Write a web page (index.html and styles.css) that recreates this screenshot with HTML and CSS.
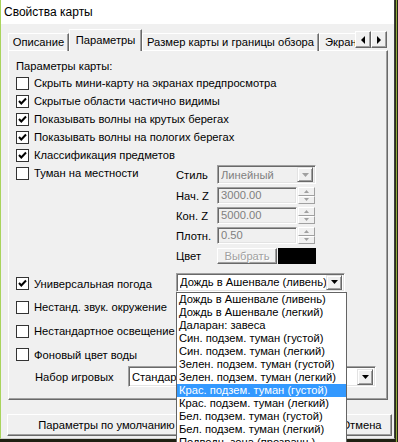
FILE: index.html
```html
<!DOCTYPE html>
<html lang="ru">
<head>
<meta charset="utf-8">
<title>Свойства карты</title>
<link rel="stylesheet" href="styles.css">
</head>
<body>
<div class="screen">
  <div class="window">
    <div class="titlebar">Свойства карты</div>
    <div class="tabstrip">
      <div class="tabs">
        <div class="tab t1">Описание</div>
        <div class="tab t2 active">Параметры</div>
        <div class="tab t3">Размер карты и границы обзора</div>
        <div class="tab t4">Экран</div>
      </div>
      <div class="tabscroll">
        <div class="sbtn"><svg width="6" height="8" viewBox="0 0 6 8"><path d="M5 0 L1 4 L5 8 Z" fill="#000"/></svg></div>
        <div class="sbtn"><svg width="6" height="8" viewBox="0 0 6 8"><path d="M1 0 L5 4 L1 8 Z" fill="#000"/></svg></div>
      </div>
    </div>
    <div class="panel">
      <div class="hdr">Параметры карты:</div>
      <div class="row"><span class="cb"></span><span>Скрыть мини-карту на экранах предпросмотра</span></div>
      <div class="row"><span class="cb on"><svg width="11" height="11" viewBox="0 0 11 11"><path d="M2 5 L4.3 7.5 L9 2.5" fill="none" stroke="#000" stroke-width="2"/></svg></span><span>Скрытые области частично видимы</span></div>
      <div class="row"><span class="cb on"><svg width="11" height="11" viewBox="0 0 11 11"><path d="M2 5 L4.3 7.5 L9 2.5" fill="none" stroke="#000" stroke-width="2"/></svg></span><span>Показывать волны на крутых берегах</span></div>
      <div class="row"><span class="cb on"><svg width="11" height="11" viewBox="0 0 11 11"><path d="M2 5 L4.3 7.5 L9 2.5" fill="none" stroke="#000" stroke-width="2"/></svg></span><span>Показывать волны на пологих берегах</span></div>
      <div class="row"><span class="cb on"><svg width="11" height="11" viewBox="0 0 11 11"><path d="M2 5 L4.3 7.5 L9 2.5" fill="none" stroke="#000" stroke-width="2"/></svg></span><span>Классификация предметов</span></div>
      <div class="fog">
        <div class="row fogleft"><span class="cb"></span><span>Туман на местности</span></div>
        <div class="foggrid">
          <span class="lbl">Стиль</span>
          <div class="combo dis small">
            <span class="ctext">Линейный</span>
            <span class="cbtn"><svg width="7" height="4" viewBox="0 0 7 4"><path d="M0 0 H7 L3.5 4 Z" fill="#a0a0a0"/></svg></span>
          </div>
          <span class="lbl">Нач. Z</span>
          <div class="numfield"><div class="edit">3000.00</div><div class="spin"><span class="sp"><svg width="5" height="3" viewBox="0 0 5 3"><path d="M0 3 H5 L2.5 0 Z" fill="#a0a0a0"/></svg></span><span class="sp"><svg width="5" height="3" viewBox="0 0 5 3"><path d="M0 0 H5 L2.5 3 Z" fill="#a0a0a0"/></svg></span></div></div>
          <span class="lbl">Кон. Z</span>
          <div class="numfield"><div class="edit">5000.00</div><div class="spin"><span class="sp"><svg width="5" height="3" viewBox="0 0 5 3"><path d="M0 3 H5 L2.5 0 Z" fill="#a0a0a0"/></svg></span><span class="sp"><svg width="5" height="3" viewBox="0 0 5 3"><path d="M0 0 H5 L2.5 3 Z" fill="#a0a0a0"/></svg></span></div></div>
          <span class="lbl">Плотн.</span>
          <div class="numfield"><div class="edit">0.50</div><div class="spin"><span class="sp"><svg width="5" height="3" viewBox="0 0 5 3"><path d="M0 3 H5 L2.5 0 Z" fill="#a0a0a0"/></svg></span><span class="sp"><svg width="5" height="3" viewBox="0 0 5 3"><path d="M0 0 H5 L2.5 3 Z" fill="#a0a0a0"/></svg></span></div></div>
          <span class="lbl">Цвет</span>
          <div class="colorrow"><div class="btn dbtn">Выбрать</div><div class="swatch"></div></div>
        </div>
      </div>
      <div class="row weather">
        <div class="wleft"><span class="cb on"><svg width="11" height="11" viewBox="0 0 11 11"><path d="M2 5 L4.3 7.5 L9 2.5" fill="none" stroke="#000" stroke-width="2"/></svg></span><span>Универсальная погода</span></div>
        <div class="combo wcombo">
          <span class="ctext">Дождь в Ашенвале (ливень)</span>
          <span class="cbtn"><svg width="7" height="4" viewBox="0 0 7 4"><path d="M0 0 H7 L3.5 4 Z" fill="#000"/></svg></span>
        </div>
      </div>
      <div class="row tall"><span class="cb"></span><span>Нестанд. звук. окружение</span></div>
      <div class="row tall"><span class="cb"></span><span>Нестандартное освещение</span></div>
      <div class="row tall3"><span class="cb"></span><span>Фоновый цвет воды</span></div>
      <div class="row setrow">
        <span class="setlbl">Набор игровых</span>
        <div class="combo scombo">
          <span class="ctext">Стандартный</span>
          <span class="cbtn"><svg width="7" height="4" viewBox="0 0 7 4"><path d="M0 0 H7 L3.5 4 Z" fill="#000"/></svg></span>
        </div>
      </div>
    </div>
    <div class="buttons">
      <div class="btn bdef">Параметры по умолчанию</div>
      <div class="btn bok">OK</div>
      <div class="btn bcancel">Отмена</div>
    </div>
    <div class="droplist">
      <div class="item">Дождь в Ашенвале (ливень)</div>
      <div class="item">Дождь в Ашенвале (легкий)</div>
      <div class="item">Даларан: завеса</div>
      <div class="item">Син. подзем. туман (густой)</div>
      <div class="item">Син. подзем. туман (легкий)</div>
      <div class="item">Зелен. подзем. туман (густой)</div>
      <div class="item">Зелен. подзем. туман (легкий)</div>
      <div class="item sel">Крас. подзем. туман (густой)</div>
      <div class="item">Крас. подзем. туман (легкий)</div>
      <div class="item">Бел. подзем. туман (густой)</div>
      <div class="item">Бел. подзем. туман (легкий)</div>
      <div class="item">Подводн. зона (прозрачн.)</div>
    </div>
  </div>
  <div class="edge"></div>
</div>
</body>
</html>
```

FILE: styles.css
```css
* { box-sizing: border-box; }
html, body { margin: 0; padding: 0; }
body {
  width: 398px;
  height: 442px;
  overflow: hidden;
  background: #1f2012;
  font-family: "Liberation Sans", Arial, sans-serif;
  font-size: 11.2px;
  color: #000;
}
.screen { display: flex; height: 442px; }
.window {
  position: relative;
  width: 395px;
  height: 439px;
  background: #f0f0f0;
  border-left: 1px solid #a9d45c;
  border-right: 1px solid #3c3c3c;
  border-bottom: 1px solid #d0d0d0;
  display: flex;
  flex-direction: column;
}
.edge {
  flex: 1;
  background: linear-gradient(90deg, #2b2c18 0 1px, #8ea83a 1px 2px, #23241a 2px);
}
.titlebar {
  height: 24px;
  background: #fff;
  padding-left: 3px;
  font-size: 12px;
  line-height: 24px;
  flex: none;
}
.tabstrip {
  position: relative;
  height: 27px;
  flex: none;
  padding-left: 7px;
}
.tabs {
  display: flex;
  align-items: flex-end;
  height: 27px;
  width: 347px;
  overflow: hidden;
}
.tab {
  flex: none;
  height: 18px;
  line-height: 16px;
  border-top: 1px solid #fff;
  border-left: 1px solid #fff;
  border-right: 1px solid #696969;
  box-shadow: inset -1px 0 0 #a0a0a0;
  text-align: center;
  white-space: nowrap;
  overflow: hidden;
}
.t1 { width: 61px; }
.t2 { width: 73px; }
.t3 { width: 177px; }
.t4 { width: 60px; text-align: left; padding-left: 5px; border-right: none; }
.tab.active {
  position: relative;
  z-index: 1;
  height: 22px;
  line-height: 20px;
  background: #f0f0f0;
}
.tabscroll {
  position: absolute;
  left: 354px;
  top: 7px;
  display: flex;
}
.sbtn {
  width: 16px;
  height: 17px;
  background: #f0f0f0;
  border-top: 1px solid #fff;
  border-left: 1px solid #fff;
  border-right: 1px solid #696969;
  border-bottom: 1px solid #696969;
  box-shadow: inset -1px -1px 0 #a0a0a0;
  display: flex;
  align-items: center;
  justify-content: center;
}
.panel {
  flex: none;
  margin-top: -1px;
  margin-left: 7px;
  width: 380px;
  height: 350px;
  border-top: 1px solid #fff;
  border-left: 1px solid #fff;
  border-right: 1px solid #696969;
  border-bottom: 1px solid #696969;
  box-shadow: inset -1px -1px 0 #a0a0a0;
  padding: 7px 0 0 7px;
}
.hdr { height: 16px; line-height: 16px; }
.row {
  display: flex;
  align-items: center;
  height: 18px;
  white-space: nowrap;
}
.cb {
  flex: none;
  width: 13px;
  height: 13px;
  border: 1px solid #333;
  background: #fff;
  margin-right: 5px;
  display: flex;
  align-items: center;
  justify-content: center;
}
.fog { display: flex; height: 100px; }
.fogleft { width: 160px; align-self: flex-start; }
.foggrid {
  margin-top: 1px;
  display: grid;
  grid-template-columns: 41px 99px;
  grid-template-rows: 19px 17px 17px 17px 17px;
  row-gap: 3px;
  align-items: center;
}
.lbl { line-height: 14px; }
.combo {
  position: relative;
  display: flex;
  align-items: center;
  background: #fff;
  border-top: 1px solid #a0a0a0;
  border-left: 1px solid #a0a0a0;
  border-right: 1px solid #fff;
  border-bottom: 1px solid #fff;
  box-shadow: inset 1px 1px 0 #696969, inset -1px -1px 0 #e3e3e3;
  padding: 0 2px 0 3px;
}
.combo .ctext { flex: 1; white-space: nowrap; overflow: hidden; }
.combo.dis { background: #f0f0f0; color: #7f7f7f; }
.small { height: 19px; }
.cbtn {
  flex: none;
  width: 16px;
  height: 15px;
  background: #f0f0f0;
  border-top: 1px solid #e3e3e3;
  border-left: 1px solid #e3e3e3;
  border-right: 1px solid #696969;
  border-bottom: 1px solid #696969;
  box-shadow: inset 1px 1px 0 #fff, inset -1px -1px 0 #a0a0a0;
  display: flex;
  align-items: center;
  justify-content: center;
}
.numfield { display: flex; height: 17px; }
.edit {
  width: 80px;
  height: 17px;
  background: #f0f0f0;
  color: #7f7f7f;
  border-top: 1px solid #a0a0a0;
  border-left: 1px solid #a0a0a0;
  border-right: 1px solid #fff;
  border-bottom: 1px solid #fff;
  box-shadow: inset 1px 1px 0 #696969, inset -1px -1px 0 #e3e3e3;
  padding-left: 3px;
  line-height: 15px;
}
.spin {
  margin-left: 1px;
  width: 17px;
  display: flex;
  flex-direction: column;
}
.sp {
  flex: 1;
  background: #f0f0f0;
  border-top: 1px solid #fff;
  border-left: 1px solid #fff;
  border-right: 1px solid #a0a0a0;
  border-bottom: 1px solid #a0a0a0;
  display: flex;
  align-items: center;
  justify-content: center;
}
.colorrow { display: flex; height: 16px; gap: 1px; }
.btn {
  background: #f0f0f0;
  border-top: 1px solid #fff;
  border-left: 1px solid #fff;
  border-right: 1px solid #696969;
  border-bottom: 1px solid #696969;
  box-shadow: inset -1px -1px 0 #a0a0a0;
  text-align: center;
  white-space: nowrap;
}
.dbtn {
  width: 60px;
  height: 16px;
  line-height: 14px;
  color: #a0a0a0;
  text-shadow: 1px 1px 0 #fff;
}
.swatch { width: 38px; height: 16px; background: #000; }
.weather { height: 20px; margin-top: 8px; }
.wleft { display: flex; align-items: center; width: 160px; padding-top: 3px; }
.wcombo { width: 169px; height: 19px; }
.tall { height: 24px; }
.weather + .tall { margin-top: 3px; }
.tall3 { height: 23px; }
.setrow { height: 21px; }
.setlbl { width: 112px; padding-left: 19px; }
.scombo { width: 248px; height: 21px; }
.scombo .cbtn { height: 16px; }
.buttons {
  flex: none;
  display: flex;
  padding: 14px 0 0 6px;
  height: 37px;
}
.buttons .btn { height: 22px; line-height: 20px; }
.bdef { width: 199px; }
.bok { width: 75px; margin-left: 46px; }
.bcancel { width: 61px; margin-left: 4px; }
.droplist {
  position: absolute;
  left: 175px;
  top: 292px;
  width: 171px;
  height: 160px;
  background: #fff;
  border: 1px solid #646464;
  overflow: hidden;
}
.item {
  height: 13px;
  line-height: 13px;
  padding-left: 2px;
  white-space: nowrap;
}
.item.sel { background: #3399ff; color: #fff; }
```
